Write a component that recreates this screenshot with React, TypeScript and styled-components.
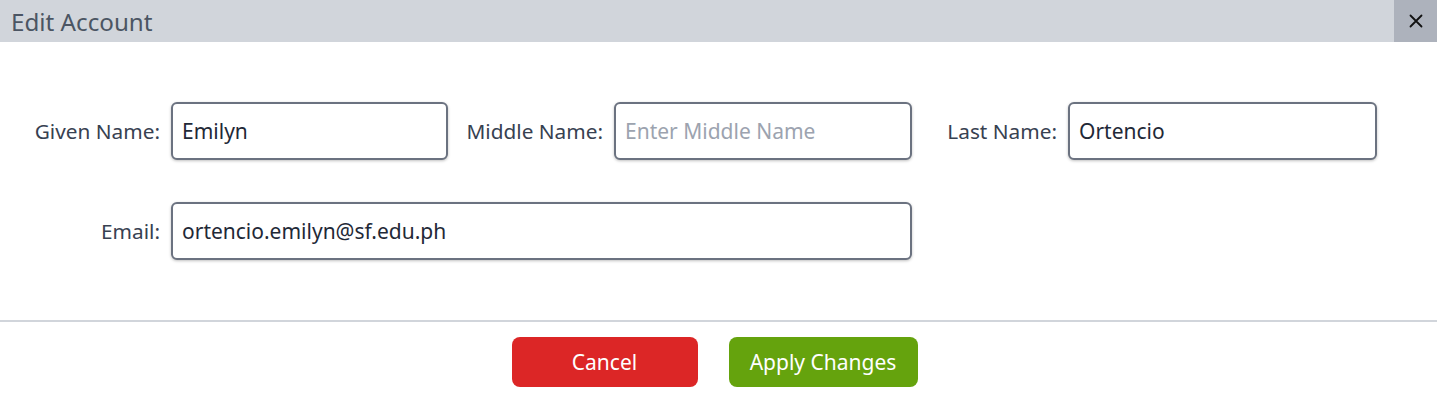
import React from "react";
import styled, { createGlobalStyle } from "styled-components";

const Global = createGlobalStyle`
  html, body { margin: 0; padding: 0; background: #ffffff; }
  body { font-family: "Noto Sans", "Open Sans", sans-serif; }
  * { box-sizing: border-box; }
`;

const Dialog = styled.div`
  width: 1437px;
  height: 402px;
  background: #ffffff;
  display: flex;
  flex-direction: column;
`;

const Header = styled.div`
  height: 42px;
  background: #d1d5db;
  display: flex;
  align-items: center;
  justify-content: space-between;
`;

const Title = styled.h2`
  margin: 0 0 0 11px;
  font-size: 24.2px;
  font-weight: 400;
  color: #4b5563;
`;

const CloseButton = styled.button`
  width: 43px;
  height: 42px;
  border: none;
  background: #adb2bc;
  display: flex;
  align-items: center;
  justify-content: center;
  padding: 0;
  cursor: pointer;
`;

const Body = styled.div`
  padding: 60px 0 60px 0;
  display: grid;
  grid-template-columns: 160px 277px 144px 298px 134px 309px;
  column-gap: 11px;
  row-gap: 42px;
  align-items: center;
`;

const Label = styled.label`
  text-align: right;
  font-size: 20.8px;
  color: #374151;
  white-space: nowrap;
`;

const Input = styled.input<{ $span?: number }>`
  grid-column: span ${(p) => p.$span ?? 1};
  height: 58px;
  border: 2px solid #6b7280;
  border-radius: 6px;
  box-shadow: 0 1px 3px rgba(0, 0, 0, 0.25);
  padding: 0 9px;
  font-family: "Noto Sans", "Open Sans", sans-serif;
  font-size: 21px;
  color: #1f2937;
  outline: none;
  &::placeholder { color: #9ca3af; }
`;

const Divider = styled.hr`
  margin: 0;
  border: none;
  height: 2px;
  background: #d1d5db;
`;

const Footer = styled.div`
  flex: 1;
  display: flex;
  justify-content: center;
  align-items: center;
  gap: 31px;
  padding-right: 8px;
`;

const Button = styled.button<{ $variant: "cancel" | "apply" }>`
  height: 50px;
  width: ${(p) => (p.$variant === "cancel" ? "186px" : "189px")};
  border: none;
  border-radius: 8px;
  background: ${(p) => (p.$variant === "cancel" ? "#dc2626" : "#65a30d")};
  color: #ffffff;
  font-family: "Noto Sans", "Open Sans", sans-serif;
  font-size: 21px;
  cursor: pointer;
`;

export default function App() {
  return (
    <>
      <Global />
      <Dialog>
        <Header>
          <Title>Edit Account</Title>
          <CloseButton aria-label="Close">
            <svg width="14" height="14" viewBox="0 0 14 14">
              <path d="M1.5 1.5 L12.5 12.5 M12.5 1.5 L1.5 12.5" stroke="#111" strokeWidth="1.8" strokeLinecap="round" />
            </svg>
          </CloseButton>
        </Header>
        <Body>
          <Label>Given Name:</Label>
          <Input defaultValue="Emilyn" />
          <Label>Middle Name:</Label>
          <Input placeholder="Enter Middle Name" />
          <Label>Last Name:</Label>
          <Input defaultValue="Ortencio" />
          <Label>Email:</Label>
          <Input $span={3} defaultValue="ortencio.emilyn@sf.edu.ph" />
        </Body>
        <Divider />
        <Footer>
          <Button $variant="cancel">Cancel</Button>
          <Button $variant="apply">Apply Changes</Button>
        </Footer>
      </Dialog>
    </>
  );
}
